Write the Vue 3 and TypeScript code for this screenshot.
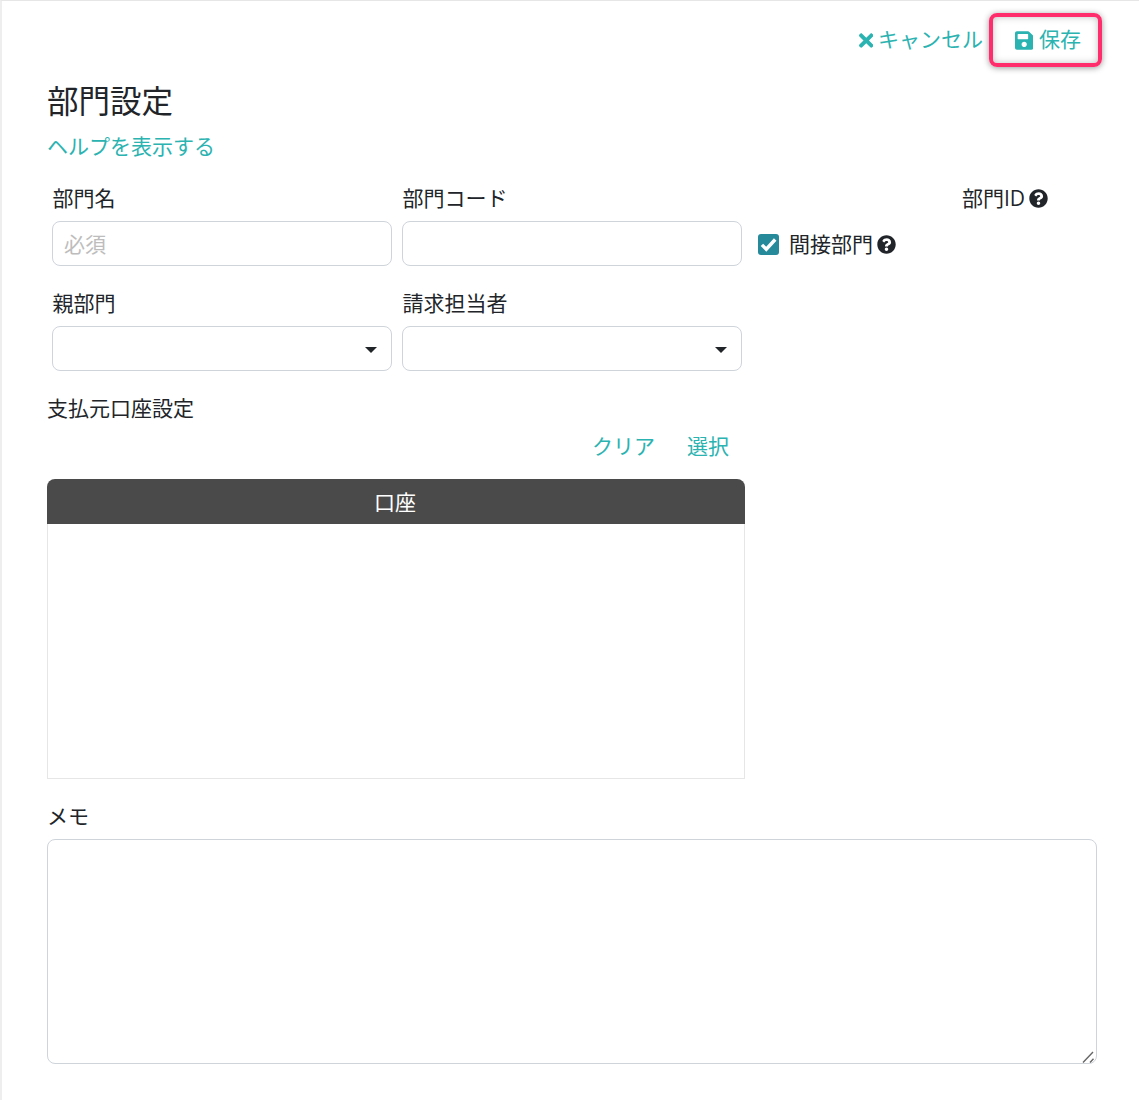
<template>
  <div class="page">
    <div class="actions">
      <a class="action cancel">
        <svg class="icon-times" viewBox="0 0 352 512"><path :d="timesPath" /></svg>キャンセル
      </a>
      <a class="action save">
        <svg class="icon-save" viewBox="0 0 448 512"><path :d="savePath" /></svg>保存
      </a>
    </div>

    <h1 class="title">部門設定</h1>
    <a class="help-link">ヘルプを表示する</a>

    <div class="form-row first">
      <div class="field">
        <label>部門名</label>
        <input type="text" placeholder="必須" />
      </div>
      <div class="field">
        <label>部門コード</label>
        <input type="text" />
      </div>
      <div class="extra">
        <div class="dept-id">
          部門ID
          <svg class="icon-help" viewBox="0 0 512 512"><path :d="helpPath" /></svg>
        </div>
        <div class="check">
          <span class="checkbox">
            <svg viewBox="0 0 16 16"><path d="M3 8.3l3.3 3.3 6.8-7.4" /></svg>
          </span>
          <span>間接部門</span>
          <svg class="icon-help" viewBox="0 0 512 512"><path :d="helpPath" /></svg>
        </div>
      </div>
    </div>

    <div class="form-row second">
      <div class="field" v-for="name in selects" :key="name">
        <label>{{ name }}</label>
        <div class="select"><span class="caret"></span></div>
      </div>
    </div>

    <div class="section-label">支払元口座設定</div>
    <div class="table-links">
      <a>クリア</a>
      <a>選択</a>
    </div>

    <div class="account-table">
      <div class="table-head">口座</div>
      <div class="table-body"></div>
    </div>

    <div class="memo-label">メモ</div>
    <div class="memo-wrap">
      <textarea class="memo"></textarea>
      <svg class="grip" viewBox="0 0 14 14"><path d="M1 12.5L11 2M8 12.5l3.5-3.7" /></svg>
    </div>
  </div>
</template>

<script setup lang="ts">
const selects: string[] = ['親部門', '請求担当者']

const timesPath =
  'M242.72 256l100.07-100.07c12.28-12.28 12.28-32.19 0-44.48l-22.24-22.24c-12.28-12.28-32.19-12.28-44.48 0L176 189.28 75.93 89.21c-12.28-12.28-32.19-12.28-44.48 0L9.21 111.45c-12.28 12.28-12.28 32.19 0 44.48L109.28 256 9.21 356.07c-12.28 12.28-12.28 32.19 0 44.48l22.24 22.24c12.28 12.28 32.2 12.28 44.48 0L176 322.72l100.07 100.07c12.28 12.28 32.2 12.28 44.48 0l22.24-22.24c12.28-12.28 12.28-32.19 0-44.48L242.72 256z'
const savePath =
  'M433.941 129.941l-83.882-83.882A48 48 0 0 0 316.118 32H48C21.49 32 0 53.49 0 80v352c0 26.51 21.49 48 48 48h352c26.51 0 48-21.49 48-48V163.882a48 48 0 0 0-14.059-33.941zM224 416c-35.346 0-64-28.654-64-64 0-35.346 28.654-64 64-64s64 28.654 64 64c0 35.346-28.654 64-64 64zm96-304.52V212c0 6.627-5.373 12-12 12H76c-6.627 0-12-5.373-12-12V108c0-6.627 5.373-12 12-12h228.52c3.183 0 6.235 1.264 8.485 3.515l3.48 3.48A11.996 11.996 0 0 1 320 111.48z'
const helpPath =
  'M504 256c0 136.997-111.043 248-248 248S8 392.997 8 256C8 119.083 119.043 8 256 8s248 111.083 248 248zM262.655 90c-54.497 0-89.255 22.957-116.549 63.758-3.536 5.286-2.353 12.415 2.715 16.258l34.699 26.31c5.205 3.947 12.621 3.008 16.665-2.122 17.864-22.658 30.113-35.797 57.303-35.797 20.429 0 45.698 13.148 45.698 32.958 0 14.976-12.363 22.667-32.534 33.976C247.128 238.528 216 254.941 216 296v4c0 6.627 5.373 12 12 12h56c6.627 0 12-5.373 12-12v-1.333c0-28.462 83.186-29.647 83.186-106.667 0-58.002-60.165-102-116.531-102zM256 338c-25.365 0-46 20.635-46 46 0 25.364 20.635 46 46 46s46-20.636 46-46c0-25.365-20.635-46-46-46z'
</script>

<style>
html, body {
  background: #fff;
}
</style>

<style scoped>
.page {
  box-sizing: border-box;
  height: 1100px;
  overflow: hidden;
  border-left: 2px solid #eee;
  border-top: 1px solid #e6e6e6;
  padding: 12px 0 0 45px;
  font-family: 'Open Sans', 'Noto Sans CJK JP', sans-serif;
  font-size: 21px;
  line-height: 31px;
  color: #212529;
}
.actions {
  display: flex;
  justify-content: flex-end;
  align-items: center;
  height: 54px;
  margin-right: 37px;
}
.action {
  display: flex;
  align-items: center;
  padding-bottom: 2px;
  color: #2bb3b1;
}
.cancel {
  margin-right: 6px;
}
.icon-times {
  width: 14.5px;
  height: 21px;
  margin: 2px 5px 0 0;
  fill: currentColor;
}
.save {
  box-sizing: border-box;
  width: 113px;
  height: 54px;
  padding-left: 22px;
  border: 4px solid #ff2d6b;
  border-radius: 8px;
  box-shadow: 0 1px 6px rgba(0, 0, 0, 0.4), inset 0 0 7px rgba(0, 0, 0, 0.25);
}
.icon-save {
  width: 18.4px;
  height: 21px;
  margin: 2px 5.5px 0 0;
  fill: currentColor;
}
.title {
  margin: 10px 0 0;
  font-size: 31.5px;
  line-height: 47px;
  font-weight: 400;
}
.help-link {
  display: block;
  margin-top: 7px;
  color: #2bb3b1;
}
.form-row {
  display: flex;
  gap: 10px;
  padding-left: 5px;
}
.form-row.first {
  margin-top: 21px;
}
.form-row.second {
  margin-top: 22px;
}
.field {
  width: 340px;
}
.field label {
  display: block;
  height: 38px;
  padding-left: 0.6px;
}
.field input,
.select {
  box-sizing: border-box;
  display: block;
  width: 340px;
  height: 45px;
  border: 1px solid #ced4da;
  border-radius: 8px;
  background: #fff;
}
.field input {
  padding: 0 11px;
  font: inherit;
  outline: none;
}
.field input::placeholder {
  color: #bdbdbd;
  opacity: 1;
}
.select {
  position: relative;
}
.caret {
  position: absolute;
  right: 14px;
  top: 20px;
  border-left: 6px solid transparent;
  border-right: 6px solid transparent;
  border-top: 6px solid #212529;
}
.extra {
  flex: 1;
  padding-left: 6px;
  margin-right: 91px;
}
.dept-id {
  display: flex;
  align-items: center;
  justify-content: flex-end;
  height: 31px;
  gap: 4px;
}
.check {
  display: flex;
  align-items: center;
  height: 31px;
  margin-top: 15px;
}
.checkbox {
  box-sizing: border-box;
  width: 21px;
  height: 21px;
  margin-right: 10px;
  border-radius: 3px;
  background: #268a9b;
}
.checkbox svg {
  display: block;
  width: 21px;
  height: 21px;
  fill: none;
  stroke: #fff;
  stroke-width: 2.6;
}
.icon-help {
  width: 19px;
  height: 19px;
  fill: #212529;
}
.check .icon-help {
  margin-left: 4px;
}
.section-label {
  margin-top: 22px;
}
.table-links {
  display: flex;
  justify-content: flex-end;
  gap: 32px;
  width: 682px;
  margin-top: 7px;
  color: #2bb3b1;
}
.account-table {
  width: 698px;
  margin-top: 17px;
}
.table-head {
  box-sizing: border-box;
  height: 45px;
  padding-right: 2px;
  line-height: 47px;
  text-align: center;
  color: #fff;
  background: #4a4a4a;
  border-radius: 8px 8px 0 0;
}
.table-body {
  box-sizing: border-box;
  height: 255px;
  border: 1px solid #e6e6e6;
  border-top: none;
}
.memo-label {
  margin-top: 22px;
}
.memo-wrap {
  position: relative;
  width: 1050px;
  height: 225px;
  margin-top: 7px;
}
.memo {
  box-sizing: border-box;
  display: block;
  width: 100%;
  height: 100%;
  border: 1px solid #ced4da;
  border-radius: 8px;
  outline: none;
  resize: none;
}
.grip {
  position: absolute;
  right: 1px;
  bottom: 0;
  width: 14px;
  height: 14px;
  fill: none;
  stroke: #666;
  stroke-width: 1.4;
}
</style>
